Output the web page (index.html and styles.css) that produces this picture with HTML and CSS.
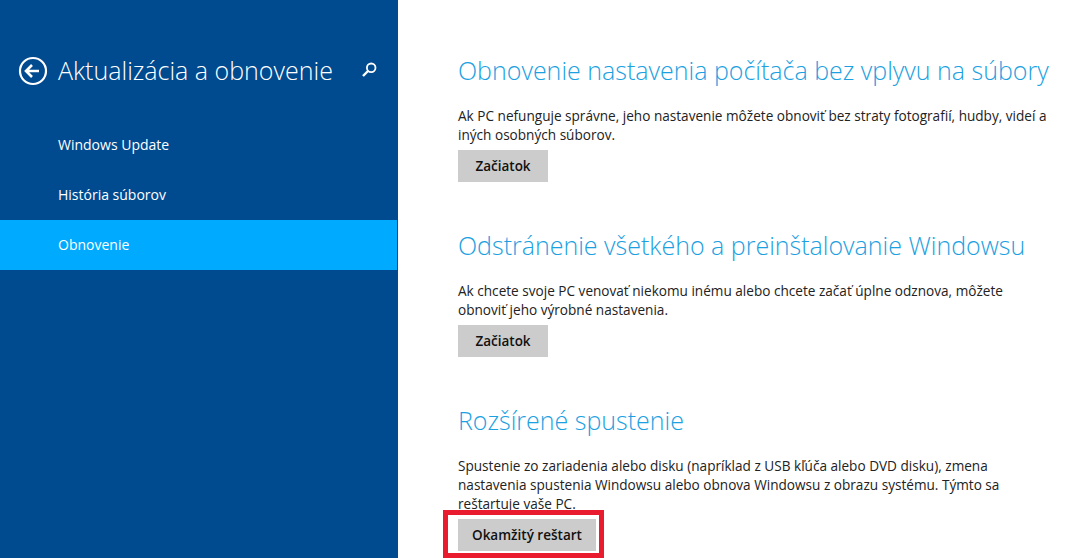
FILE: index.html
```html
<!DOCTYPE html>
<html lang="sk">
<head>
  <meta charset="UTF-8" />
  <title>Aktualizácia a obnovenie</title>
  <link rel="stylesheet" href="styles.css">
</head>
<body>
  <div class="settings">
    <div class="sidebar">
      <div class="sidebar-head">
        <svg class="back-icon" width="30" height="30" viewBox="0 0 30 30">
          <circle cx="15" cy="15" r="13" fill="none" stroke="#fff" stroke-width="2.2"/>
          <path d="M21 15H8.5M14 9L8 15L14 21" fill="none" stroke="#fff" stroke-width="2.6"/>
        </svg>
        <h1>Aktualizácia a obnovenie</h1>
        <svg class="search-icon" width="16" height="16" viewBox="0 0 16 16">
          <circle cx="10.2" cy="5.8" r="4.3" fill="none" stroke="#fff" stroke-width="1.8"/>
          <path d="M7 9L2 14" fill="none" stroke="#fff" stroke-width="2.4"/>
        </svg>
      </div>
      <ul class="nav">
        <li>Windows Update</li>
        <li>História súborov</li>
        <li class="active">Obnovenie</li>
      </ul>
    </div>
    <div class="content">
      <section class="block">
        <h2>Obnovenie nastavenia počítača bez vplyvu na súbory</h2>
        <p>Ak PC nefunguje správne, jeho nastavenie môžete obnoviť bez straty fotografií, hudby, videí a iných osobných súborov.</p>
        <button class="btn">Začiatok</button>
      </section>
      <section class="block">
        <h2>Odstránenie všetkého a preinštalovanie Windowsu</h2>
        <p>Ak chcete svoje PC venovať niekomu inému alebo chcete začať úplne odznova, môžete obnoviť jeho výrobné nastavenia.</p>
        <button class="btn">Začiatok</button>
      </section>
      <section class="block">
        <h2>Rozšírené spustenie</h2>
        <p>Spustenie zo zariadenia alebo disku (napríklad z USB kľúča alebo DVD disku), zmena nastavenia spustenia Windowsu alebo obnova Windowsu z obrazu systému. Týmto sa reštartuje vaše PC.</p>
        <button class="btn">Okamžitý reštart</button>
      </section>
    </div>
  </div>
  <div class="highlight"></div>
</body>
</html>
```

FILE: styles.css
```css
html, body {
  margin: 0;
  height: 100%;
  overflow: hidden;
}

body {
  font-family: 'Open Sans', 'Noto Sans', sans-serif;
  background: #ffffff;
  position: relative;
}

.settings {
  display: flex;
  height: 558px;
}

.sidebar {
  width: 398px;
  flex-shrink: 0;
  background: #004a8f;
  color: #fff;
}

.sidebar-head {
  display: flex;
  align-items: center;
  padding: 56px 0 0 18px;
  height: 30px;
}

.sidebar-head h1 {
  margin: -3px 0 0 10px;
  font-size: 25px;
  font-weight: 300;
  white-space: nowrap;
}

.search-icon {
  margin-left: 28px;
  margin-top: -2px;
}

.nav {
  list-style: none;
  margin: 34px 0 0;
  padding: 0;
}

.nav li {
  height: 50px;
  line-height: 49px;
  padding-left: 58px;
  font-size: 14px;
}

.nav .active {
  background: #00aaff;
  margin-right: 1px;
}

.content {
  padding: 51px 0 0 60px;
  flex: 1;
}

.block {
  height: 175px;
}

.block h2 {
  margin: 0;
  font-size: 25px;
  line-height: 38px;
  font-weight: 300;
  color: #1ba1e2;
  white-space: nowrap;
}

.block p {
  margin: 17px 0 0;
  width: 596px;
  font-size: 13.6px;
  line-height: 19px;
  color: #222;
}

.btn {
  display: block;
  margin-top: 6px;
  min-width: 90px;
  height: 32px;
  padding: 0 14px 0;
  border: none;
  background: #cccccc;
  color: #111;
  font-family: inherit;
  font-size: 13.5px;
  font-weight: 600;
}

.highlight {
  position: absolute;
  left: 443px;
  top: 510px;
  width: 151px;
  height: 38px;
  border: 5px solid #e81c2e;
}
```
